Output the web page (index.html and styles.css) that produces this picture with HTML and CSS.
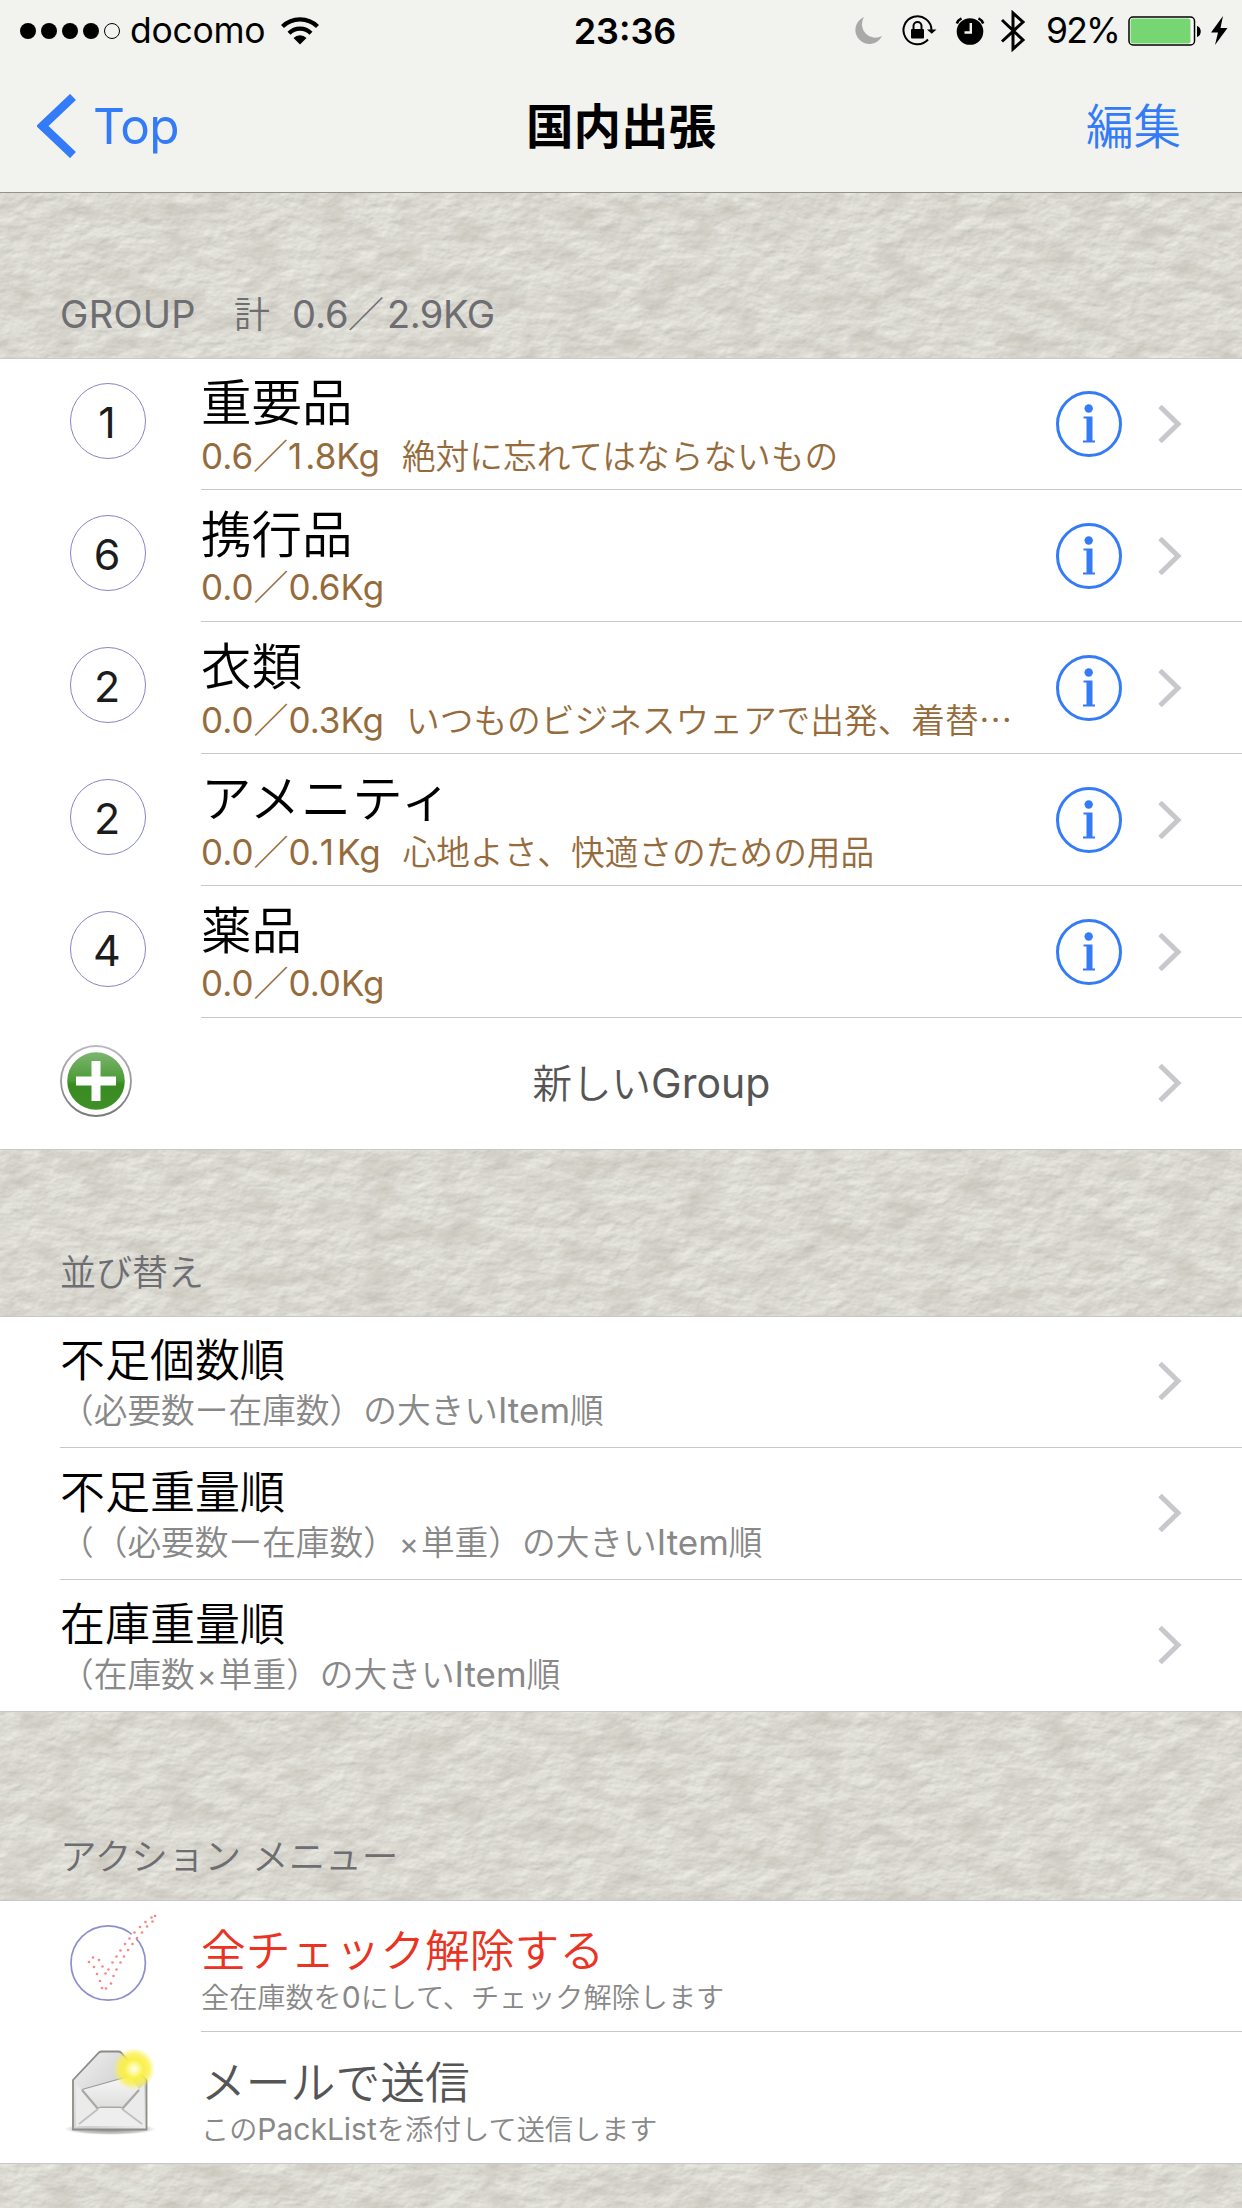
FILE: index.html
```html
<!DOCTYPE html>
<html lang="ja">
<head>
<meta charset="utf-8">
<title>国内出張</title>
<link rel="stylesheet" href="styles.css">
</head>
<body>
<svg class="paper" aria-hidden="true">
  <filter id="paper" x="0" y="0" width="100%" height="100%" color-interpolation-filters="sRGB">
    <feTurbulence type="fractalNoise" baseFrequency="0.06 0.09" numOctaves="4" seed="8" result="n"/>
    <feDiffuseLighting in="n" surfaceScale="0.65" diffuseConstant="1.132" lighting-color="#dddcd5" result="lit">
      <feDistantLight azimuth="240" elevation="62"/>
    </feDiffuseLighting>
    <feTurbulence type="fractalNoise" baseFrequency="0.025 0.045" numOctaves="4" seed="3"/>
    <feColorMatrix values="0 0 0 0 .74  0 0 0 0 .72  0 0 0 0 .67  1.1 0 0 0 -.45" result="stain"/>
    <feMerge><feMergeNode in="lit"/><feMergeNode in="stain"/></feMerge>
  </filter>
  <rect width="100%" height="100%" filter="url(#paper)"/>
</svg>
<svg class="defs" aria-hidden="true">
  <symbol id="chevron" viewBox="0 0 24 40"><path d="M2 2.500L20 20L2 37.500" fill="none" stroke="#c7c7cc" stroke-width="5"/></symbol>
  <symbol id="info" viewBox="0 0 66 66">
    <circle cx="33" cy="33" r="31.500" fill="none" stroke="#347bf8" stroke-width="3"/>
    <circle cx="32.700" cy="17.500" r="4.200" fill="#347bf8"/>
    <path d="M27.500 25.500H36.500V49.500H39V51.500H27V49.500H30.500V27.500H27.500Z" fill="#347bf8"/>
  </symbol>
</svg>

<header class="top">
  <div class="status">
    <div class="status-left">
      <div class="signal"><i></i><i></i><i></i><i></i><i class="empty"></i></div>
      <span class="carrier">docomo</span>
      <svg class="wifi" width="38" height="28" viewBox="0 0 38 28">
        <path d="M1.500 9.500A25 25 0 0 1 36.500 9.500M8 16.200A15.500 15.500 0 0 1 30 16.200" fill="none" stroke="#000" stroke-width="4.200"/>
        <path d="M19 27.500L12.500 21A9.200 9.200 0 0 1 25.500 21Z"/>
      </svg>
    </div>
    <div class="clock">23:36</div>
    <div class="status-right">
      <svg class="moon" width="28" height="28" viewBox="0 0 28 28"><path d="M9 0A14 14 0 1 0 27 19A13.500 13.500 0 0 1 9 0Z" fill="#a9a9a8"/></svg>
      <svg class="lock" width="35" height="31" viewBox="0 0 35 31">
        <path d="M29.500 15.500A14 14 0 1 0 26 24.500" fill="none" stroke="#000" stroke-width="2"/>
        <path d="M25 14.500H34.500L29.700 18.800Z"/><rect x="9" y="14" width="13" height="9.500" rx="1"/>
        <path d="M11.500 15V11A4 4 0 0 1 19.500 11V15" fill="none" stroke="#000" stroke-width="2"/>
      </svg>
      <svg class="alarm" width="30" height="28" viewBox="0 0 30 28">
        <circle cx="15" cy="14.500" r="13.300"/>
        <path d="M15.800 6V15.500H9.500" fill="none" stroke="#f2f3ee" stroke-width="2.400"/>
        <path d="M1.800 6.500A9 9 0 0 1 6.500 1.300M28.200 6.500A9 9 0 0 0 23.500 1.300" fill="none" stroke="#000" stroke-width="2.500"/>
      </svg>
      <svg class="bt" width="26" height="42" viewBox="0 0 26 42"><path d="M2 10L23 30L13 39V3L23 12L2 31.500" fill="none" stroke="#000" stroke-width="3"/></svg>
      <span class="pct">92%</span>
      <svg class="battery" width="74" height="30" viewBox="0 0 74 30">
        <rect x="1" y="1" width="65.500" height="28" rx="4" fill="#fff" stroke="#000" stroke-width="1.500"/>
        <rect x="2.500" y="2.500" width="60" height="25" rx="2.500" fill="#76d672"/>
        <path d="M69 10C74 11 74 20 69 21Z"/>
      </svg>
      <svg class="bolt" width="17" height="29" viewBox="0 0 17 29"><path d="M12 0L0 16.500H7L4 29L16.500 12H9.500Z"/></svg>
    </div>
  </div>
  <nav class="nav">
    <a class="back">
      <svg width="40" height="64" viewBox="0 0 40 64"><path d="M36 3L5.500 32L36 61" fill="none" stroke="#347bf8" stroke-width="8.500"/></svg>
      <span>Top</span>
    </a>
    <h1>国内出張</h1>
    <a class="edit">編集</a>
  </nav>
</header>

<main>
  <h2 class="head head-1"><span class="en">GROUP</span><span class="kei">計</span><span class="n1">0.6</span><span class="sl">／</span><span class="n2">2.9KG</span></h2>
  <section class="list groups">
    <div class="row">
      <span class="badge">1</span>
      <div class="text"><b>重要品</b><p><span class="num">0.6<i>／</i><span class="one">1</span>.8Kg</span>絶対に忘れてはならないもの</p></div>
      <svg class="info"><use href="#info"/></svg><svg class="chev"><use href="#chevron"/></svg>
    </div>
    <div class="row">
      <span class="badge">6</span>
      <div class="text"><b>携行品</b><p><span class="num">0.0<i>／</i>0.6Kg</span></p></div>
      <svg class="info"><use href="#info"/></svg><svg class="chev"><use href="#chevron"/></svg>
    </div>
    <div class="row">
      <span class="badge">2</span>
      <div class="text"><b>衣類</b><p><span class="num">0.0<i>／</i>0.3Kg</span>いつものビジネスウェアで出発、着替…</p></div>
      <svg class="info"><use href="#info"/></svg><svg class="chev"><use href="#chevron"/></svg>
    </div>
    <div class="row">
      <span class="badge">2</span>
      <div class="text"><b class="kana">アメニティ</b><p><span class="num">0.0<i>／</i>0.<span class="one">1</span>Kg</span>心地よさ、快適さのための用品</p></div>
      <svg class="info"><use href="#info"/></svg><svg class="chev"><use href="#chevron"/></svg>
    </div>
    <div class="row">
      <span class="badge">4</span>
      <div class="text"><b>薬品</b><p><span class="num">0.0<i>／</i>0.0Kg</span></p></div>
      <svg class="info"><use href="#info"/></svg><svg class="chev"><use href="#chevron"/></svg>
    </div>
    <div class="row add">
      <svg class="plus" width="72" height="74" viewBox="0 0 72 74">
        <defs>
          <linearGradient id="green" x1="0" y1="0" x2="0" y2="1"><stop offset="0" stop-color="#7cb56f"/><stop offset=".5" stop-color="#4a9a35"/><stop offset=".55" stop-color="#3a8a22"/><stop offset="1" stop-color="#409028"/></linearGradient>
          <linearGradient id="rim" x1="0" y1="0" x2="0" y2="1"><stop offset="0" stop-color="#b9b9be"/><stop offset="1" stop-color="#77777d"/></linearGradient>
        </defs>
        <circle cx="36" cy="37" r="35" fill="#fff" stroke="url(#rim)" stroke-width="1.800"/>
        <circle cx="36" cy="37" r="28.800" fill="url(#green)"/>
        <path d="M31.500 17H40.500V32.500H56V41.500H40.500V57H31.500V41.500H16V32.500H31.500Z" fill="#fff"/>
      </svg>
      <div class="add-label">新しい<span>Group</span></div>
      <svg class="chev"><use href="#chevron"/></svg>
    </div>
  </section>

  <h2 class="head head-2">並び替え</h2>
  <section class="list sorts">
    <div class="row"><div class="text"><b>不足個数順</b><p>（必要数ー在庫数）の大きい<span class="en">Item</span>順</p></div><svg class="chev"><use href="#chevron"/></svg></div>
    <div class="row"><div class="text"><b>不足重量順</b><p>（（必要数ー在庫数）<span class="times">×</span>単重）の大きい<span class="en">Item</span>順</p></div><svg class="chev"><use href="#chevron"/></svg></div>
    <div class="row"><div class="text"><b>在庫重量順</b><p>（在庫数<span class="times">×</span>単重）の大きい<span class="en">Item</span>順</p></div><svg class="chev"><use href="#chevron"/></svg></div>
  </section>

  <h2 class="head head-3">アクション<span class="gap"></span>メニュー</h2>
  <section class="list actions">
    <div class="row">
      <svg class="icon" width="110" height="110" viewBox="50 1910 110 110">
        <circle cx="108.200" cy="1963" r="37.200" fill="none" stroke="#8f8fcb" stroke-width="1.700"/>
        <path d="M132 1934L136 1938.500" stroke="#fff" stroke-width="5"/>
        <g fill="#f48882">
          <circle cx="89" cy="1962" r="1.300"/><circle cx="93" cy="1957.500" r="1.300"/><circle cx="99" cy="1960" r="1.300"/>
          <circle cx="94" cy="1967" r="1.300"/><circle cx="102.500" cy="1966.500" r="1.300"/><circle cx="97" cy="1974" r="1.300"/>
          <circle cx="105.500" cy="1973.500" r="1.300"/><circle cx="100" cy="1981" r="1.300"/><circle cx="102" cy="1988" r="1.300"/>
          <circle cx="106" cy="1988.500" r="1.300"/><circle cx="111" cy="1983.500" r="1.300"/><circle cx="113.500" cy="1976" r="1.300"/>
          <circle cx="108.500" cy="1969.500" r="1.300"/><circle cx="116.500" cy="1969.500" r="1.300"/><circle cx="112.500" cy="1962.500" r="1.300"/>
          <circle cx="120.500" cy="1962.500" r="1.300"/><circle cx="116.500" cy="1956.500" r="1.300"/><circle cx="124" cy="1956.500" r="1.300"/>
          <circle cx="120.500" cy="1950.500" r="1.300"/><circle cx="128" cy="1950" r="1.300"/><circle cx="125" cy="1944" r="1.300"/>
          <circle cx="132.500" cy="1944" r="1.300"/><circle cx="129.500" cy="1938.500" r="1.300"/><circle cx="137" cy="1938" r="1.300"/>
          <circle cx="134.500" cy="1932.500" r="1.300"/><circle cx="142" cy="1932.500" r="1.300"/><circle cx="140" cy="1927" r="1.300"/>
          <circle cx="147" cy="1926.500" r="1.300"/><circle cx="145.500" cy="1922" r="1.300"/><circle cx="152.500" cy="1921.500" r="1.300"/>
          <circle cx="151.500" cy="1917.500" r="1.300"/><circle cx="155" cy="1916" r="1.300"/>
        </g>
      </svg>
      <div class="text"><b class="red">全チェック解除する</b><p>全在庫数を<span class="en">0</span>にして、チェック解除します</p></div>
    </div>
    <div class="row">
      <svg class="icon" width="110" height="110" viewBox="50 2042 110 110">
        <defs>
          <linearGradient id="flap" x1="0" y1="0" x2="1" y2="1"><stop offset="0" stop-color="#f2f2f2"/><stop offset=".6" stop-color="#cfcfcf"/><stop offset="1" stop-color="#eee"/></linearGradient>
          <linearGradient id="body" x1="0" y1="0" x2="0" y2="1"><stop offset="0" stop-color="#f8f8f8"/><stop offset="1" stop-color="#dedede"/></linearGradient>
          <radialGradient id="glow"><stop offset="0" stop-color="#fff"/><stop offset=".16" stop-color="#fffcb0"/><stop offset=".45" stop-color="#faf04a"/><stop offset=".72" stop-color="#faf04a" stop-opacity=".8"/><stop offset="1" stop-color="#faf04a" stop-opacity="0"/></radialGradient>
          <radialGradient id="shade"><stop offset="0" stop-color="#555" stop-opacity=".8"/><stop offset=".75" stop-color="#777" stop-opacity=".4"/><stop offset="1" stop-color="#999" stop-opacity="0"/></radialGradient>
        </defs>
        <ellipse cx="110" cy="2129" rx="46" ry="6" fill="url(#shade)"/>
        <path d="M73 2129.500V2080L99 2052.500Q100 2051.500 102 2051.500H118Q120 2051.500 121 2052.500L146.500 2080V2129.500Z" fill="url(#flap)" stroke="#8b8d86" stroke-width="1.800"/>
        <path d="M76 2127V2084L98 2108L80 2125ZM144 2127V2084L122 2108L142 2125Z" fill="#ebebeb"/>
        <path d="M82 2089.500L130 2076L139 2089L122 2107L98 2108Z" fill="url(#body)"/>
        <path d="M82 2089.500L130 2076" stroke="#999" stroke-width="1.200"/>
        <path d="M82 2090L98 2109Q99 2107.500 101 2107.500H119Q121 2107.500 123 2108L139 2090" fill="none" stroke="#a7aaa3" stroke-width="2.200"/>
        <path d="M77 2126L98 2109Q99 2108 101 2108H119Q121 2108 123 2109L144 2126Z" fill="#eee"/>
        <path d="M79 2124L98 2109M142 2124L122 2109" stroke="#bfc1bb" stroke-width="1.800"/>
        <circle cx="134" cy="2069" r="21" fill="url(#glow)"/>
      </svg>
      <div class="text"><b class="grey">メールで送信</b><p>この<span class="en">PackList</span>を添付して送信します</p></div>
    </div>
  </section>
</main>
</body>
</html>
```
FILE: styles.css
```css
* { box-sizing: border-box; margin: 0; padding: 0; }
body {
  width: 1242px;
  height: 2208px;
  overflow: hidden;
  background: #dcdbd3;
  font-family: Inter, "Noto Sans CJK JP", sans-serif;
  color: #000;
  text-spacing-trim: space-all;
}
i { font-style: normal; }
svg { flex: none; display: block; }
.paper { position: absolute; inset: 0; width: 1242px; height: 2208px; z-index: -1; }
.defs { position: absolute; width: 0; height: 0; }

/* Status and navigation bars */
.top { height: 193px; background: #f2f3ee; border-bottom: 1px solid #92928e; }
.status { height: 60px; display: grid; grid-template-columns: 564px 122px 1fr; align-items: center; }
.status-left { display: flex; align-items: center; padding-left: 20px; }
.signal { display: flex; gap: 5px; margin-right: 10px; }
.signal i { width: 16px; height: 16px; border-radius: 50%; background: #000; }
.signal .empty { background: none; border: 1px solid #000; }
.carrier { font-size: 35.500px; line-height: 60px; padding-top: 1px; width: 142px; letter-spacing: -0.3px; }
.wifi { margin-left: 9px; }
.clock { font-size: 36px; font-weight: 600; text-align: center; line-height: 60px; padding-top: 1px; }
.status-right { display: flex; align-items: center; padding-left: 169px; }
.lock { margin-left: 19px; }
.alarm { margin-left: 18px; }
.bt { margin-left: 15px; }
.pct { margin-left: 20px; width: 82px; font-size: 35.500px; letter-spacing: -1.8px; line-height: 60px; padding-top: 1px; }
.bolt { margin-left: 9px; }

.nav { height: 132px; display: grid; grid-template-columns: 380px 1fr 380px; align-items: center; padding: 0 61px 0 37px; }
.back { display: flex; align-items: center; gap: 16px; color: #347bf8; font-size: 49.500px; letter-spacing: -0.8px; line-height: 132px; }
.nav h1 { font: 700 47.500px/132px "Noto Sans CJK JP", sans-serif; text-align: center; padding: 0 0 3px 24px; height: 132px; margin-top: -5px; }
.edit { font: 350 47.500px/132px "Noto Sans CJK JP", sans-serif; color: #347bf8; text-align: right; height: 132px; margin-top: -5px; }

/* Section headings */
.head { display: flex; align-items: baseline; padding-left: 60px; font: 350 36px/50px "Noto Sans CJK JP", sans-serif; color: #6d6d72; }
.head-1 { height: 165px; padding-top: 94px; }
.head-1 .en, .head-1 .n1, .head-1 .n2 { font-family: Inter, sans-serif; font-weight: 400; font-size: 38px; }
.head-1 .en { width: 174px; letter-spacing: 0.3px; }
.head-1 .n2 { letter-spacing: -0.5px; }
.kei { width: 58px; }
.n1 { width: 56px; }
.sl { width: 39px; }
.head-2 { height: 166px; padding-top: 95px; }
.head-3 { height: 188px; padding-top: 118px; font-size: 36.600px; }
.gap { width: 11px; }

/* Table rows */
.list { background: #fff; box-shadow: inset 0 1px #c8c7cc; }
.row { position: relative; height: 132px; display: flex; align-items: flex-start; padding-right: 60px; }
.row::after { content: ""; position: absolute; left: 60px; right: 0; bottom: 0; height: 1px; background: #c8c7cc; }
.groups .row::after, .actions .row::after { left: 201px; }
.list .row:last-child::after { left: 0; }
.badge { width: 76px; height: 76px; margin: 25px 55px 0 70px; border: 1.500px solid #8585c8; border-radius: 50%; font-size: 43px; line-height: 77px; text-align: center; color: #1c1c1c; padding-right: 2px; }
.text { flex: 1; min-width: 0; white-space: nowrap; font-family: "Noto Sans CJK JP", sans-serif; }
.text b { display: block; font-weight: 350; font-size: 50.500px; line-height: 52px; padding-top: 15px; }
.text .kana { letter-spacing: 0.8px; }
.text p { display: flex; align-items: baseline; font-weight: 350; font-size: 33.700px; line-height: 44px; color: #966b3c; padding-top: 8px; }
.num { display: flex; font-family: Inter, "Noto Sans CJK JP", sans-serif; font-weight: 400; font-size: 35px; margin-right: 22px; }
.num i { width: 35px; font-weight: 350; }
.one { padding-right: 3px; }
.info { width: 66px; height: 66px; margin: 33px 36px 0 0; }
.chev { width: 24px; height: 40px; margin-top: 46px; }

.plus { margin: 26px 0 0 60px; }
.add-label { flex: 1; display: flex; justify-content: center; align-items: baseline; font: 350 39.500px/60px "Noto Sans CJK JP", sans-serif; color: #555; padding: 33px 0 0 13px; }
.add-label span { font-family: Inter, sans-serif; font-weight: 400; font-size: 41px; }
.add .chev, .sorts .chev { margin-top: 45px; }

.sorts .text { padding-left: 60px; }
.sorts b { font-size: 45px; padding-top: 16px; }
.sorts p { padding-top: 3px; color: #888; }
.sorts .en { font-family: Inter, sans-serif; font-weight: 400; font-size: 35px; }
.times { width: 24px; text-align: center; font-family: Inter, sans-serif; font-weight: 400; font-size: 30px; }

.icon { margin: 10px 41px 0 50px; }
.actions b { font-size: 44.800px; padding-top: 22px; }
.actions p { font-size: 28.150px; color: #888; padding-top: 0; }
.actions .en { font-family: Inter, sans-serif; font-weight: 400; font-size: 30px; }
.red { color: #ea3323; }
.grey { color: #555; }
```
